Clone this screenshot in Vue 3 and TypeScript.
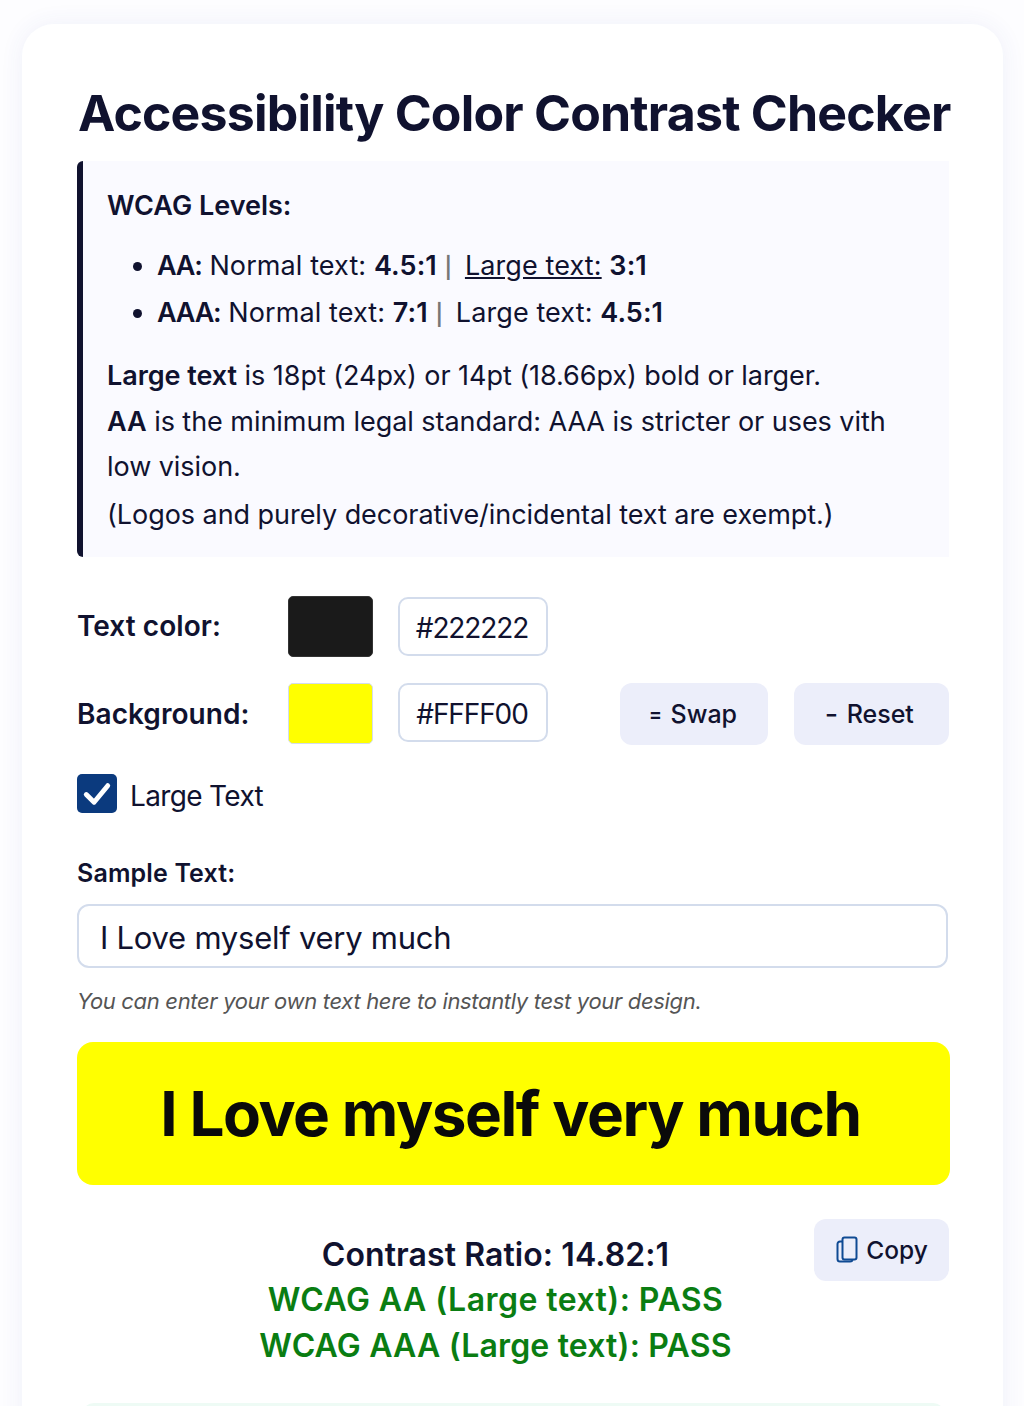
<script setup lang="ts">
const textColor: string = '#222222'
const bgColor: string = '#FFFF00'
const sample: string = 'I Love myself very much'
</script>

<template>
  <main class="page">
    <section class="card">
      <h1 class="title">Accessibility Color Contrast Checker</h1>

      <div class="info">
        <p class="info-head"><strong>WCAG Levels:</strong></p>
        <ul class="levels">
          <li><strong class="tag">AA:</strong> Normal text: <strong>4.5:1</strong> <span class="sep">|</span> <u>Large text:</u> <strong>3:1</strong></li>
          <li><strong class="tag">AAA:</strong> Normal text: <strong>7:1</strong> <span class="sep">|</span> Large text: <strong>4.5:1</strong></li>
        </ul>
        <p class="note tall"><strong>Large text</strong> is 18pt (24px) or 14pt (18.66px) bold or larger.</p>
        <p class="note"><strong>AA</strong> is the minimum legal standard: AAA is stricter or uses vith low vision.</p>
        <p class="note last">(Logos and purely decorative/incidental text are exempt.)</p>
      </div>

      <div class="color-row first">
        <label class="color-label">Text color:</label>
        <span class="swatch dark"></span>
        <input class="hex" :value="textColor" />
      </div>
      <div class="color-row second">
        <label class="color-label">Background:</label>
        <span class="swatch yellow"></span>
        <input class="hex" :value="bgColor" />
        <div class="actions">
          <button class="btn swap"><span class="glyph">=</span> Swap</button>
          <button class="btn reset"><span class="glyph">−</span> Reset</button>
        </div>
      </div>

      <label class="check">
        <span class="box">
          <svg viewBox="0 0 40 40" width="40" height="39" aria-hidden="true">
            <path d="M9 21l8 8L31 12" fill="none" stroke="#fff" stroke-width="5" stroke-linecap="round" stroke-linejoin="round" />
          </svg>
        </span>
        <span class="check-text">Large Text</span>
      </label>

      <label class="sample-label">Sample Text:</label>
      <input class="sample-input" :value="sample" />
      <p class="hint">You can enter your own text here to instantly test your design.</p>

      <div class="preview">{{ sample }}</div>

      <div class="result">
        <div class="ratio">Contrast Ratio: 14.82:1</div>
        <div class="pass aa">WCAG AA (Large text): PASS</div>
        <div class="pass aaa">WCAG AAA (Large text): PASS</div>
        <button class="btn copy">
          <svg viewBox="0 0 24 28" width="24" height="28" aria-hidden="true">
            <path d="M7.5 3.5a2 2 0 0 1 2-2h10a2 2 0 0 1 2 2v18a2 2 0 0 1-2 2h-10a2 2 0 0 1-2-2z" fill="none" stroke="#0f4a93" stroke-width="2" />
            <path d="M7.5 5.5H5a2.500 2.500 0 0 0-2.500 2.500v15A2.500 2.500 0 0 0 5 25.500h10a2.500 2.500 0 0 0 2.500-2.500" fill="none" stroke="#0f4a93" stroke-width="2" />
          </svg>
          Copy
        </button>
      </div>

      <div class="status"></div>
    </section>
  </main>
</template>

<style>
html, body { margin: 0; height: 1406px; overflow: hidden; background: #fdfdff; }
</style>

<style scoped>
.page {
  height: 1406px;
  overflow: hidden;
  box-sizing: border-box;
  padding: 24px 21px 0 22px;
  font-family: Inter, "Liberation Sans", sans-serif;
  color: #10122f;
}
.card {
  background: #fff;
  border-radius: 32px 32px 0 0;
  padding: 56px 54px 40px 55px;
  height: 1500px;
  box-sizing: border-box;
  box-shadow: 0 0 24px rgba(60, 70, 170, 0.07);
}
.title {
  margin: 0 0 19px 1px;
  font-size: 50px;
  line-height: 62px;
  font-weight: 700;
  letter-spacing: -0.8px;
  white-space: nowrap;
  position: relative;
  top: 2px;
}
.info {
  background: #fafaff;
  border-left: 6px solid #10122f;
  border-radius: 6px 0 0 6px;
  padding: 22px 24px 20px 24px;
  height: 396px;
  box-sizing: border-box;
  font-size: 27px;
  line-height: 45px;
}
.info p { margin: 0; }
.info strong { font-weight: 600; }
.note { letter-spacing: -0.05px; }
.info .tall { line-height: 46px; }
.info .last { margin-top: 3px; }
.levels {
  margin: 14px 0 17px;
  padding: 0 0 0 50px;
}
.levels li { line-height: 47px; letter-spacing: 0.1px; }
.info .tag { letter-spacing: -1.2px; }
.sep {
  color: #777;
  font-size: 21px;
  line-height: 1;
  font-weight: 600;
  margin-right: 5px;
}
.color-row {
  display: flex;
  align-items: center;
}
.color-row.first { margin-top: 39px; height: 61px; }
.color-row.second { margin-top: 26px; height: 62px; align-items: flex-start; }
.color-label {
  width: 211px;
  font-size: 28px;
  font-weight: 600;
  letter-spacing: 0.05px;
}
.first .color-label { position: relative; top: -1px; }
.second .color-label { align-self: center; }
.swatch {
  width: 85px;
  height: 61px;
  box-sizing: border-box;
  border-radius: 5px;
  margin-right: 25px;
}
.dark { background: #1a1a1a; border: 1px solid #333; }
.yellow { background: #ffff00; border: 1px solid #d3dcec; }
.hex {
  width: 150px;
  height: 59px;
  box-sizing: border-box;
  border: 2px solid #d3dcec;
  border-radius: 10px;
  background: #fff;
  font: 400 28px Inter, "Liberation Sans", sans-serif;
  letter-spacing: -1.1px;
  color: #10122f;
  text-align: center;
  padding: 2px 2px 0 0;
}
.actions {
  display: flex;
  gap: 26px;
  margin-left: 72px;
}
.btn {
  border: 0;
  background: #eceefa;
  border-radius: 12px;
  font: 500 25px Inter, "Liberation Sans", sans-serif;
  color: #10122f;
  padding: 0;
  height: 62px;
}
.glyph {
  font-size: 19px;
  font-weight: 700;
  margin-right: 2px;
  position: relative;
  top: -2px;
}
.swap { width: 148px; padding-right: 2px; }
.reset { width: 155px; padding-right: 4px; }
.check {
  display: flex;
  align-items: center;
  gap: 13px;
  margin-top: 29px;
  height: 39px;
  font-size: 28px;
}
.check-text { letter-spacing: -0.65px; position: relative; top: 2px; }
.box {
  width: 40px;
  height: 39px;
  display: block;
  background: #0b3a7e;
  border-radius: 5px;
}
.box svg { display: block; }
.sample-label {
  display: block;
  margin-top: 43px;
  font-size: 25px;
  line-height: 34px;
  font-weight: 600;
  letter-spacing: 0.15px;
}
.sample-input {
  display: block;
  margin-top: 14px;
  width: 871px;
  height: 64px;
  box-sizing: border-box;
  border: 2px solid #d3dcec;
  border-radius: 12px;
  padding: 2px 21px 0;
  background: #fff;
  font: 400 31px Inter, "Liberation Sans", sans-serif;
  letter-spacing: -0.25px;
  color: #10122f;
}
.hint {
  margin: 18px 0 0;
  font-size: 22px;
  line-height: 30px;
  font-style: italic;
  letter-spacing: -0.33px;
  color: #555;
}
.preview {
  margin-top: 26px;
  height: 143px;
  width: 873px;
  box-sizing: border-box;
  padding-right: 6px;
  display: flex;
  align-items: center;
  justify-content: center;
  background: #ffff00;
  border-radius: 16px;
  font-size: 62px;
  font-weight: 700;
  letter-spacing: -1.45px;
  color: #0a0a0a;
}
.result {
  position: relative;
  margin-top: 47px;
  padding-right: 36px;
  width: 837px;
  text-align: center;
}
.ratio, .pass {
  font-size: 32px;
  line-height: 45.500px;
  font-weight: 600;
}
.ratio { letter-spacing: 0.08px; }
.pass { color: #0a7d12; position: relative; top: -0.5px; }
.aa { letter-spacing: 0.45px; }
.aaa { letter-spacing: 0.17px; }
.copy {
  position: absolute;
  top: -13px;
  right: 1px;
  width: 135px;
  display: flex;
  align-items: center;
  justify-content: center;
  gap: 7px;
  font-size: 24.500px;
}
.status {
  margin: 34px 4px 0 5px;
  height: 60px;
  background: #eefbf5;
  border-radius: 12px;
}
</style>
